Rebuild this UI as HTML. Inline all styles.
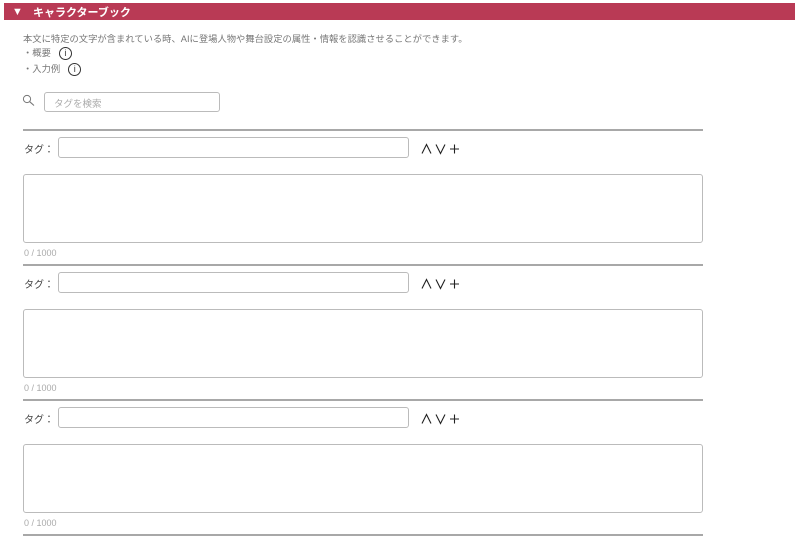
<!DOCTYPE html>
<html><head><meta charset="utf-8"><style>
*{margin:0;padding:0;box-sizing:border-box}
body{width:800px;height:543px;background:#fff;font-family:"Liberation Sans","Noto Sans CJK JP",sans-serif;position:relative;overflow:hidden}
.hdr{position:absolute;left:4px;top:3px;width:791px;height:17px;background:#b93a55;color:#fff;font-weight:bold;font-size:11px}
.hdr span{position:absolute;top:0;height:17px;display:flex;align-items:center}
.abs{position:absolute;line-height:1}
.g{color:#777;font-size:9.3px}
.info{display:inline-block;width:13px;height:13px;border:1px solid #333;border-radius:50%;font-size:9px;line-height:11px;text-align:center;color:#333;vertical-align:middle;margin-left:8px}
.inp{position:absolute;border:1px solid #bbb;border-radius:3px;background:#fff}
.line{position:absolute;left:23px;width:680px;height:2px;background:#a8a8a8}
.tl{position:absolute;left:24px;font-size:10px;color:#444;line-height:1}
.cnt{position:absolute;left:24px;font-size:9px;color:#aaa;line-height:1}
</style></head><body>
<div class="hdr"><span style="left:8px;font-size:11px">▼</span><span style="left:29px">キャラクターブック</span></div>
<div class="abs g" style="left:23px;top:35px">本文に特定の文字が含まれている時、AIに登場人物や舞台設定の属性・情報を認識させることができます。</div>
<div class="abs g" style="left:23px;top:47px">・概要<span class="info">i</span></div>
<div class="abs g" style="left:23px;top:63px">・入力例<span class="info">i</span></div>
<svg class="abs" style="left:22px;top:94px" width="14" height="13" viewBox="0 0 14 13"><circle cx="5" cy="5" r="3.6" fill="none" stroke="#777" stroke-width="1"/><line x1="7.7" y1="7.7" x2="12" y2="11.5" stroke="#777" stroke-width="1.1"/></svg>
<div class="inp" style="left:44px;top:92px;width:176px;height:20px;font-size:9.5px;color:#aaa;padding:3px 0 0 9px">タグを検索</div>

<div class="line" style="top:129px"></div>
<div class="tl" style="top:146px">タグ：</div>
<div class="inp" style="left:58px;top:137px;width:351px;height:21px"></div>
<svg class="abs" style="left:421px;top:143px" width="40" height="12" viewBox="0 0 40 12"><path d="M1 10.5 L5.5 1.5 L10 10.5 M15 1.5 L19.5 10.5 L24 1.5 M29 6 H38 M33.5 1.5 V10.5" fill="none" stroke="#222" stroke-width="1.1"/></svg>
<div class="inp" style="left:23px;top:174px;width:680px;height:69px"></div>
<div class="cnt" style="top:249px">0 / 1000</div>

<div class="line" style="top:264px"></div>
<div class="tl" style="top:281px">タグ：</div>
<div class="inp" style="left:58px;top:272px;width:351px;height:21px"></div>
<svg class="abs" style="left:421px;top:278px" width="40" height="12" viewBox="0 0 40 12"><path d="M1 10.5 L5.5 1.5 L10 10.5 M15 1.5 L19.5 10.5 L24 1.5 M29 6 H38 M33.5 1.5 V10.5" fill="none" stroke="#222" stroke-width="1.1"/></svg>
<div class="inp" style="left:23px;top:309px;width:680px;height:69px"></div>
<div class="cnt" style="top:384px">0 / 1000</div>

<div class="line" style="top:399px"></div>
<div class="tl" style="top:416px">タグ：</div>
<div class="inp" style="left:58px;top:407px;width:351px;height:21px"></div>
<svg class="abs" style="left:421px;top:413px" width="40" height="12" viewBox="0 0 40 12"><path d="M1 10.5 L5.5 1.5 L10 10.5 M15 1.5 L19.5 10.5 L24 1.5 M29 6 H38 M33.5 1.5 V10.5" fill="none" stroke="#222" stroke-width="1.1"/></svg>
<div class="inp" style="left:23px;top:444px;width:680px;height:69px"></div>
<div class="cnt" style="top:519px">0 / 1000</div>
<div class="line" style="top:534px"></div>
</body></html>
